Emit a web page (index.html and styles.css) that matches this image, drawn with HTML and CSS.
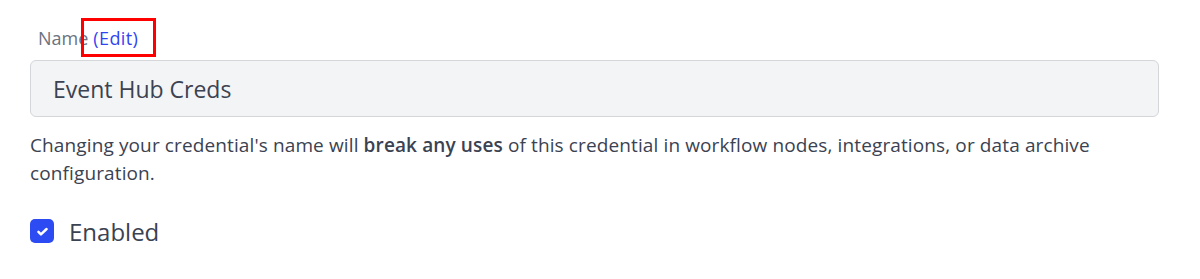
FILE: index.html
```html
<!DOCTYPE html>
<html>
<head>
<meta charset="utf-8">
<link rel="stylesheet" href="styles.css">
</head>
<body>
<div class="form">
  <div class="field">
    <div class="label-row">
      <span class="label">Name</span>
      <a class="edit" href="#">(Edit)<span class="highlight"></span></a>
    </div>
    <div class="input">Event Hub Creds</div>
    <p class="help">Changing your credential's name will <strong>break any uses</strong> of this credential in workflow nodes, integrations, or data archive configuration.</p>
  </div>
  <label class="check-row">
    <span class="checkbox">
      <svg viewBox="0 0 24 24" width="15" height="15"><path d="M5.5 12.5l4 4L18.5 8" fill="none" stroke="#fff" stroke-width="4" stroke-linecap="round" stroke-linejoin="round"/></svg>
    </span>
    <span class="check-label">Enabled</span>
  </label>
</div>
</body>
</html>
```

FILE: styles.css
```css
html, body {
  margin: 0;
  padding: 0;
  background: #ffffff;
}
body {
  font-family: "Open Sans", "Noto Sans", sans-serif;
  color: #3b4251;
}
.form {
  padding: 26px 41px 0 30px;
}
.label-row {
  display: flex;
  align-items: center;
  gap: 5px;
  height: 24px;
  padding-left: 8px;
}
.label {
  font-size: 18px;
  color: #6b7280;
}
.edit {
  position: relative;
  font-size: 18px;
  color: #2f45f2;
  text-decoration: none;
  letter-spacing: 0.4px;
}
.highlight {
  position: absolute;
  left: -12px;
  right: -18px;
  top: -8px;
  bottom: -7px;
  border: 3px solid #ff0000;
}
.input {
  margin-top: 10px;
  height: 57px;
  box-sizing: border-box;
  border: 1px solid #d4d6da;
  border-radius: 6px;
  background: #f3f4f6;
  display: flex;
  align-items: center;
  padding-left: 22px;
  font-size: 23px;
  color: #3b4251;
}
.help {
  margin: 14px 0 0 0;
  font-size: 19px;
  letter-spacing: 0.12px;
  line-height: 28px;
  color: #3b4251;
}
.help strong {
  font-weight: 600;
}
.check-row {
  display: flex;
  align-items: center;
  gap: 15px;
  margin-top: 30px;
  height: 28px;
}
.checkbox {
  width: 24px;
  height: 24px;
  border-radius: 5px;
  background: #2d4bf2;
  display: flex;
  align-items: center;
  justify-content: center;
}
.check-label {
  font-size: 24px;
  color: #3b4251;
}
```
